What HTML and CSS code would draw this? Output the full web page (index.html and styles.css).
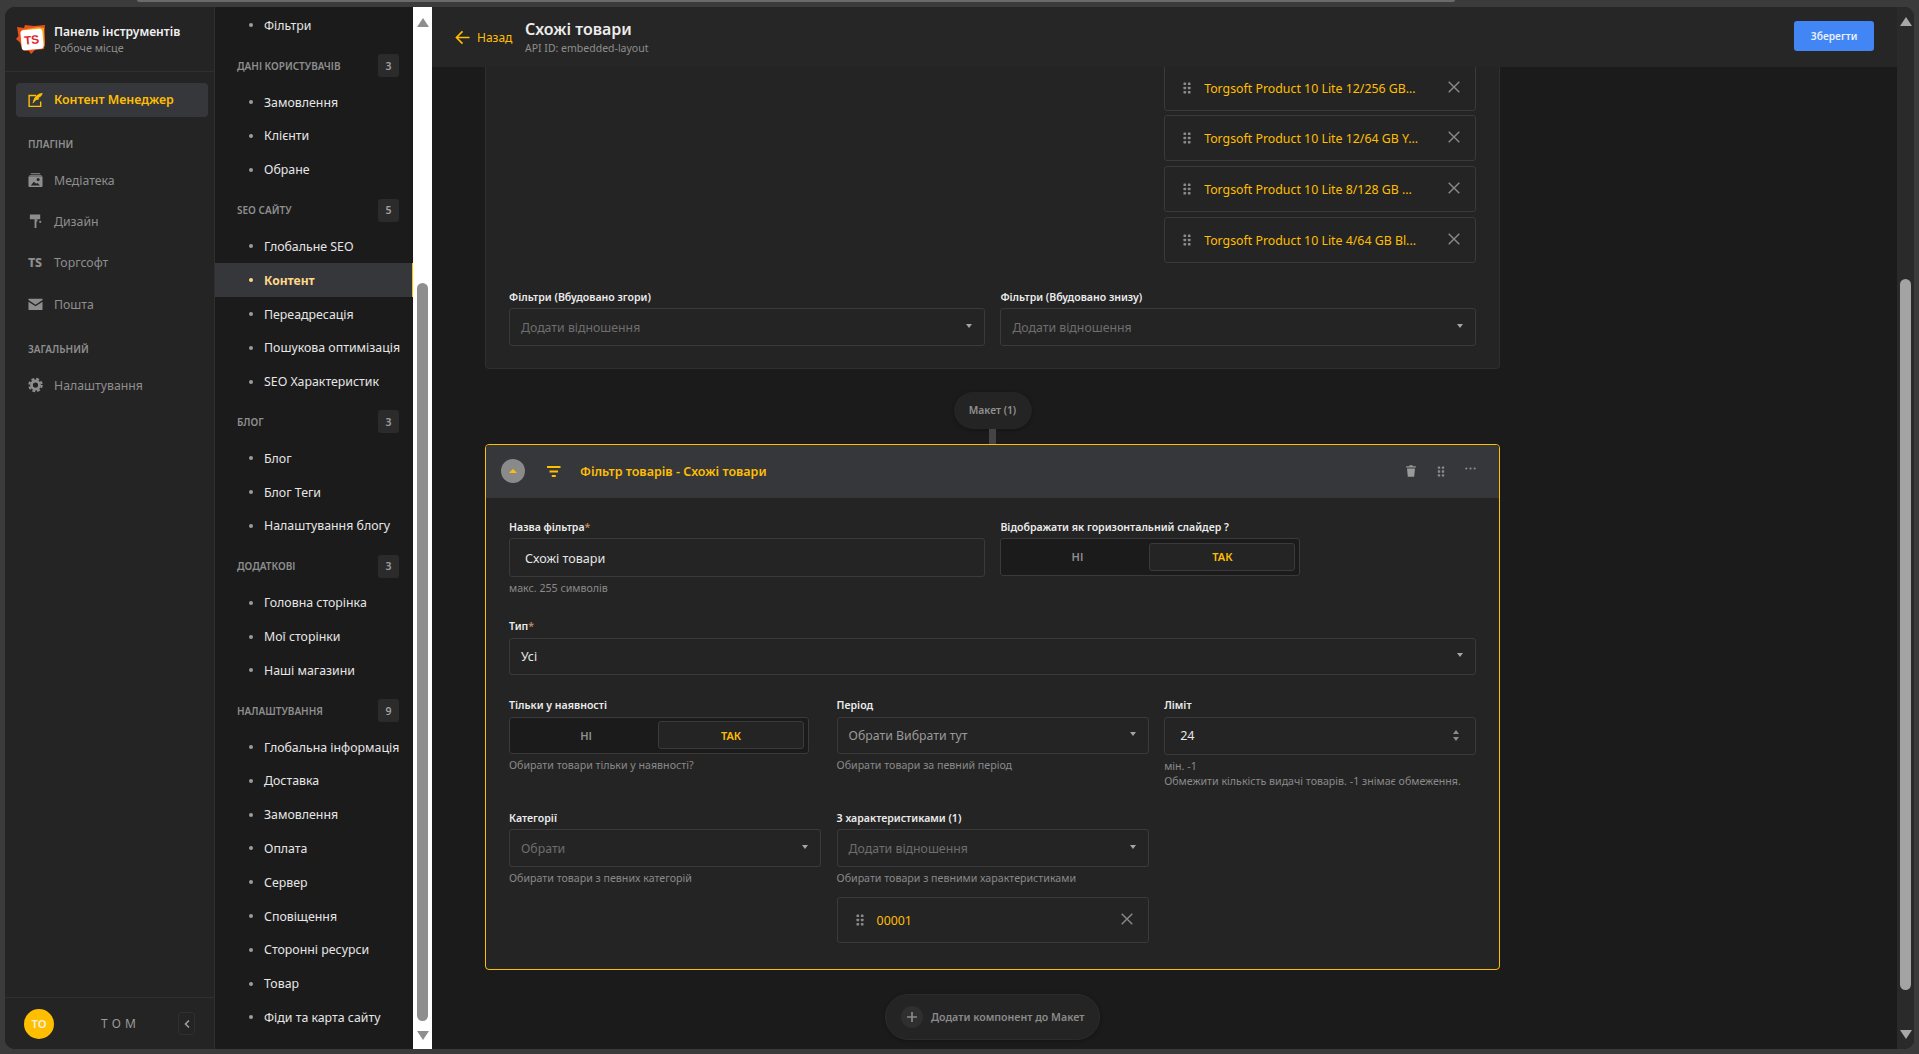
FILE: index.html
```html
<!DOCTYPE html>
<html lang="uk">
<head>
<meta charset="utf-8">
<title>Схожі товари</title>
<link rel="stylesheet" href="styles.css">
</head>
<body>
<svg class="sprite" aria-hidden="true">
  <symbol id="i-handle" viewBox="0 0 8 12"><g fill="currentColor"><rect x="0.5" y="0.5" width="2.6" height="2.6" rx=".6"/><rect x="4.9" y="0.5" width="2.6" height="2.6" rx=".6"/><rect x="0.5" y="4.7" width="2.6" height="2.6" rx=".6"/><rect x="4.9" y="4.7" width="2.6" height="2.6" rx=".6"/><rect x="0.5" y="8.9" width="2.6" height="2.6" rx=".6"/><rect x="4.9" y="8.9" width="2.6" height="2.6" rx=".6"/></g></symbol>
  <symbol id="i-close" viewBox="0 0 12 12"><path d="M.7.7l10.6 10.6M11.3.7L.7 11.3" fill="none" stroke="currentColor" stroke-width="1.4"/></symbol>
</svg>
<div class="topline"></div>
<div class="app">
  <aside class="side">
    <div class="brand">
      <svg class="logo" viewBox="0 0 30 30">
        <path d="M1 3l7 1 1-3 9 1 11-1-.5 6 .5 11-1 7-9 1-4 4-2-3-6-.5-3-8-4-3.500 2.500-3z" fill="#e8511a"/>
        <path d="M6 6l16-3 6 1 .5 18-7 1.500H9z" fill="#f7a414"/>
        <rect x="5" y="5.500" width="22" height="20" rx="3" fill="#fff" transform="rotate(-5 16 15)"/>
        <text x="15.500" y="20" class="logo-t" transform="rotate(-5 16 15)">TS</text>
      </svg>
      <div class="brand-txt">
        <div class="brand-t">Панель інструментів</div>
        <div class="brand-s">Робоче місце</div>
      </div>
    </div>
    <nav class="side-nav">
      <a class="side-active">
        <svg class="ico" viewBox="0 0 16 16"><path d="M8.500 3.200H1.200v11.600h12.300V9.500" fill="none" stroke="currentColor" stroke-width="1.500"/><path d="M15.800.4c-4.800.3-8 2.600-10 7.600l-1 3.600 1.300-.8c1.100-1.700 2.200-2.800 3.400-3.200l1.600.1 1-1.500-1.500-.1 2.200-1.200c1.300-1 2.200-2.600 3-4.500z" fill="currentColor"/></svg>
        <span>Контент Менеджер</span>
      </a>
      <div class="side-head side-head-first">ПЛАГІНИ</div>
      <a class="side-item">
        <svg class="ico" viewBox="0 0 16 16"><path d="M3 .8h10v1H3zM1.500 2.800h13v1h-13z" fill="currentColor"/><rect x="0.500" y="4" width="15" height="11.500" rx="1" fill="currentColor"/><circle cx="10.800" cy="7.500" r="1.600" fill="#242424"/><path d="M3 13.800l3.200-4 2.500 2.300 1.300-1 2.800 2.700z" fill="#242424"/></svg>
        <span>Медіатека</span>
      </a>
      <a class="side-item">
        <svg class="ico" viewBox="0 0 16 16"><path d="M2 1h11v5H2z" fill="currentColor"/><path d="M7 6h3v2.500H9v7H7z" fill="currentColor"/><circle cx="13" cy="8.800" r="1.200" fill="currentColor"/></svg>
        <span>Дизайн</span>
      </a>
      <a class="side-item">
        <span class="ts">TS</span>
        <span>Торгсофт</span>
      </a>
      <a class="side-item">
        <svg class="ico" viewBox="0 0 16 16"><path d="M.5 2.500h15v1.300L8 8.800.5 3.800z" fill="currentColor"/><path d="M.5 5.500L8 10.500l7.500-5v8a1 1 0 0 1-1 1h-13a1 1 0 0 1-1-1z" fill="currentColor"/></svg>
        <span>Пошта</span>
      </a>
      <div class="side-head">ЗАГАЛЬНИЙ</div>
      <a class="side-item">
        <svg class="ico" viewBox="0 0 16 16"><circle cx="8" cy="8" r="4.300" fill="none" stroke="currentColor" stroke-width="3"/><circle cx="8" cy="8" r="6.600" fill="none" stroke="currentColor" stroke-width="2.200" stroke-dasharray="3.100 2.080"/></svg>
        <span>Налаштування</span>
      </a>
    </nav>
    <div class="side-foot">
      <div class="avatar">ТО</div>
      <div class="user">ТОМ</div>
      <button class="collapse" type="button"><svg viewBox="0 0 8 10"><path d="M6 1.500L2.500 5 6 8.500" fill="none" stroke="currentColor" stroke-width="1.600"/></svg></button>
    </div>
  </aside>

  <nav class="sub">
    <a class="sub-item">Фільтри</a>
    <div class="sub-head"><span>ДАНІ КОРИСТУВАЧІВ</span><b>3</b></div>
    <a class="sub-item">Замовлення</a>
    <a class="sub-item">Клієнти</a>
    <a class="sub-item">Обране</a>
    <div class="sub-head"><span>SEO САЙТУ</span><b>5</b></div>
    <a class="sub-item">Глобальне SEO</a>
    <a class="sub-item sub-active">Контент</a>
    <a class="sub-item">Переадресація</a>
    <a class="sub-item">Пошукова оптимізація</a>
    <a class="sub-item">SEO Характеристик</a>
    <div class="sub-head"><span>БЛОГ</span><b>3</b></div>
    <a class="sub-item">Блог</a>
    <a class="sub-item">Блог Теги</a>
    <a class="sub-item">Налаштування блогу</a>
    <div class="sub-head"><span>ДОДАТКОВІ</span><b>3</b></div>
    <a class="sub-item">Головна сторінка</a>
    <a class="sub-item">Мої сторінки</a>
    <a class="sub-item">Наші магазини</a>
    <div class="sub-head"><span>НАЛАШТУВАННЯ</span><b>9</b></div>
    <a class="sub-item">Глобальна інформація</a>
    <a class="sub-item">Доставка</a>
    <a class="sub-item">Замовлення</a>
    <a class="sub-item">Оплата</a>
    <a class="sub-item">Сервер</a>
    <a class="sub-item">Сповіщення</a>
    <a class="sub-item">Сторонні ресурси</a>
    <a class="sub-item">Товар</a>
    <a class="sub-item">Фіди та карта сайту</a>
  </nav>
  <div class="bar bar-sub">
    <i class="arrow-up"></i>
    <i class="thumb thumb-sub"></i>
    <i class="arrow-down"></i>
  </div>

  <main class="main">
    <header class="head">
      <a class="back">
        <svg viewBox="0 0 16 16"><path d="M15.500 8H1.500M8 1.500L1.500 8 8 14.500" fill="none" stroke="currentColor" stroke-width="1.700"/></svg>
        <span>Назад</span>
      </a>
      <div class="head-t">
        <h1>Схожі товари</h1>
        <p>API ID: embedded-layout</p>
      </div>
      <button class="save" type="button">Зберегти</button>
    </header>
    <div class="scroll">
      <section class="card card-top">
        <div class="cols3">
          <div class="rel-list">
            <div class="rel"><svg class="handle"><use href="#i-handle"/></svg><span>Torgsoft Product 10 Lite 12/256 GB...</span><svg class="x"><use href="#i-close"/></svg></div>
            <div class="rel"><svg class="handle"><use href="#i-handle"/></svg><span>Torgsoft Product 10 Lite 12/64 GB Y...</span><svg class="x"><use href="#i-close"/></svg></div>
            <div class="rel"><svg class="handle"><use href="#i-handle"/></svg><span>Torgsoft Product 10 Lite 8/128 GB ...</span><svg class="x"><use href="#i-close"/></svg></div>
            <div class="rel"><svg class="handle"><use href="#i-handle"/></svg><span>Torgsoft Product 10 Lite 4/64 GB Bl...</span><svg class="x"><use href="#i-close"/></svg></div>
          </div>
        </div>
        <div class="cols2 row-filters">
          <div><label class="lbl">Фільтри (Вбудовано згори)</label><div class="ctl sel ph">Додати відношення</div></div>
          <div><label class="lbl">Фільтри (Вбудовано знизу)</label><div class="ctl sel ph">Додати відношення</div></div>
        </div>
      </section>

      <div class="pill-wrap"><div class="pill">Макет (1)</div><div class="conn"></div></div>

      <section class="card card-open">
        <div class="card-head">
          <span class="toggle-btn"><i></i></span>
          <svg class="filter" viewBox="0 0 14 11"><path d="M0 0h13.500v2H0zM2.500 4.500h8.500v2H2.500zM4.800 9h4v2h-4z" fill="currentColor"/></svg>
          <span class="card-title">Фільтр товарів - Схожі товари</span>
          <div class="card-tools">
            <svg class="t-trash" viewBox="0 0 10 12"><path d="M3.500.3h3v1h3.300v1.200H.2V1.300h3.300zM1 3.400h8l-.8 8.300H1.800z" fill="currentColor"/></svg>
            <svg class="t-grip"><use href="#i-handle"/></svg>
            <svg class="t-dots" viewBox="0 0 11 3"><circle cx="1.300" cy="1.500" r="1.100" fill="currentColor"/><circle cx="5.500" cy="1.500" r="1.100" fill="currentColor"/><circle cx="9.700" cy="1.500" r="1.100" fill="currentColor"/></svg>
          </div>
        </div>
        <div class="card-body">
          <div class="cols2 r1">
            <div><label class="lbl">Назва фільтра<em>*</em></label><div class="ctl inp inp-tall val">Схожі товари</div><p class="hint">макс. 255 символів</p></div>
            <div><label class="lbl">Відображати як горизонтальний слайдер ?</label>
              <div class="tog"><span class="tog-off">НІ</span><span class="tog-on">ТАК</span></div></div>
          </div>
          <div class="r2"><label class="lbl">Тип<em>*</em></label><div class="ctl sel val">Усі</div></div>
          <div class="cols3 r3">
            <div><label class="lbl">Тільки у наявності</label>
              <div class="tog"><span class="tog-off">НІ</span><span class="tog-on">ТАК</span></div>
              <p class="hint">Обирати товари тільки у наявності?</p></div>
            <div><label class="lbl">Період</label><div class="ctl sel mid">Обрати Вибрати тут</div><p class="hint">Обирати товари за певний період</p></div>
            <div><label class="lbl">Ліміт</label>
              <div class="ctl inp num val"><span>24</span><span class="spin"><i></i><i></i></span></div>
              <p class="hint">мін. -1</p>
              <p class="hint">Обмежити кількість видачі товарів. -1 знімає обмеження.</p></div>
          </div>
          <div class="cols3 r4">
            <div><label class="lbl">Категорії</label><div class="ctl sel ph">Обрати</div><p class="hint">Обирати товари з певних категорій</p></div>
            <div><label class="lbl">З характеристиками (1)</label><div class="ctl sel ph">Додати відношення</div><p class="hint">Обирати товари з певними характеристиками</p>
              <div class="rel rel-one"><svg class="handle"><use href="#i-handle"/></svg><span>00001</span><svg class="x"><use href="#i-close"/></svg></div></div>
          </div>
        </div>
      </section>

      <button class="add" type="button"><span class="plus"><svg viewBox="0 0 12 12"><path d="M6 1v10M1 6h10" stroke="currentColor" stroke-width="1.700"/></svg></span>Додати компонент до Макет</button>
    </div>
  </main>
  <div class="bar bar-main">
    <i class="arrow-up"></i>
    <i class="thumb thumb-main"></i>
    <i class="arrow-down"></i>
  </div>
</div>
</body>
</html>
```
FILE: styles.css
```css
* { box-sizing: border-box; }
html, body { margin: 0; height: 100%; }
body {
  background: #3b3b3b;
  padding: 7px 5px 5px;
  font-family: "Noto Sans", "Open Sans", sans-serif;
  overflow: hidden;
  position: relative;
  color: #e6e6e6;
}
.sprite { display: none; }
.topline {
  position: absolute;
  left: 137px; top: 0;
  width: 1318px; height: 2px;
  background: #6a6a6a;
  border-radius: 0 0 4px 4px;
}
.app {
  display: flex;
  height: 1042px;
  border-radius: 10px;
  overflow: hidden;
  background: #1b1b1b;
}

/* left rail */
.side {
  width: 210px;
  flex: none;
  background: #242424;
  border-right: 1px solid #2f2f2f;
  display: flex;
  flex-direction: column;
}
.brand {
  height: 65px;
  flex: none;
  border-bottom: 1px solid #2f2f2f;
  display: flex;
  align-items: center;
  padding: 0 0 1px 11px;
  gap: 8px;
}
.logo { width: 30px; height: 30px; flex: none; }
.logo-t { font: 800 12px "Liberation Sans", sans-serif; fill: #e0252b; text-anchor: middle; letter-spacing: -.3px; }
.brand-t { font-size: 12.100px; font-weight: 600; color: #f0f0f0; line-height: 17px; }
.brand-s { font-size: 10.800px; color: #8e8e8e; line-height: 15px; margin-top: 0; }
.side-nav { flex: 1; padding: 11px 6px 0 11px; }
.side-active {
  height: 34px;
  background: #36373b;
  border-radius: 4px;
  display: flex;
  align-items: center;
  padding: 0 0 1px 12px;
  gap: 11px;
  color: #ffbf00;
  font-size: 12.400px;
  font-weight: 600;
}
.ico { width: 15px; height: 16px; flex: none; }
.side-head {
  font-size: 10px;
  font-weight: 600;
  color: #8e8e8e;
  padding-left: 12px;
  height: 14px;
  line-height: 14px;
  margin: 17px 0 9px;
}
.side-head-first { margin-top: 20px; }
.side-item {
  height: 41.300px;
  display: flex;
  align-items: center;
  padding: 0 0 1px 12px;
  gap: 11px;
  color: #8e8e8e;
  font-size: 12.300px;
}
.ts { width: 15px; font: 800 12.500px "Noto Sans", sans-serif; letter-spacing: -.4px; flex: none; }
.side-foot {
  height: 52px;
  flex: none;
  border-top: 1px solid #2f2f2f;
  display: flex;
  align-items: center;
  padding-left: 19px;
  position: relative;
}
.avatar {
  width: 30px; height: 30px;
  border-radius: 50%;
  background: #ffbf00;
  color: #f5f0dc;
  font-size: 11.500px;
  font-weight: 600;
  display: flex;
  align-items: center;
  justify-content: center;
  flex: none;
}
.user {
  margin-left: 47px;
  width: 77px;
  font-size: 12px;
  letter-spacing: 4.200px;
  color: #9a9a9a;
}
.collapse {
  width: 17px; height: 23px;
  padding: 0;
  background: transparent;
  border: 1px solid #2f2f2f;
  border-radius: 3px;
  color: #a0a0a0;
  display: flex;
  align-items: center;
  justify-content: center;
}
.collapse svg { width: 8px; height: 10px; }

/* sub navigation */
.sub {
  width: 198px;
  flex: none;
  background: #1b1b1b;
  padding-top: 1.350px;
  overflow: hidden;
}
.sub-item {
  height: 33.780px;
  display: flex;
  align-items: center;
  padding-left: 49px;
  color: #e6e6e6;
  font-size: 12.350px;
  position: relative;
  white-space: nowrap;
}
.sub-item::before {
  content: "";
  position: absolute;
  left: 34px; top: 50%;
  width: 4px; height: 4px;
  margin-top: -2px;
  border-radius: 50%;
  background: #9c9c9c;
}
.sub-active {
  background: #36373b;
  color: #ffd88a;
  font-weight: 700;
  font-size: 12.100px;
  border-right: 1px solid #ffbf00;
}
.sub-active::before { background: #ffd88a; }
.sub-head {
  height: 23px;
  margin: 12px 14px 8.100px 22px;
  display: flex;
  align-items: center;
  justify-content: space-between;
  font-size: 10px;
  font-weight: 600;
  color: #8e8e8e;
}
.sub-head b {
  width: 21px; height: 23px;
  background: #2b2b2b;
  border-radius: 3px;
  font-weight: 600;
  font-size: 10.500px;
  color: #a0a0a0;
  display: flex;
  align-items: center;
  justify-content: center;
}

/* fake scrollbars */
.bar {
  flex: none;
  display: flex;
  flex-direction: column;
  align-items: center;
}
.bar-sub { width: 19px; background: #fff; padding-top: 11px; }
.bar-main { width: 17px; background: #2a2a2a; padding-top: 10px; }
.arrow-up, .arrow-down { width: 0; height: 0; border-left: 6.500px solid transparent; border-right: 6.500px solid transparent; flex: none; }
.arrow-up { border-bottom: 9px solid #8e8e8e; }
.arrow-down { border-top: 9px solid #8e8e8e; }
.bar-main .arrow-up { border-bottom-color: #a8a8a8; }
.bar-main .arrow-down { border-top-color: #a8a8a8; }
.thumb { width: 11px; border-radius: 6px; flex: none; }
.thumb-sub { height: 738px; background: #8e8e8e; margin: 256px 0 10px; }
.thumb-main { height: 711px; background: #a3a3a3; margin: 253px 0 40px; }

/* main */
.main { width: 1465px; flex: none; display: flex; flex-direction: column; min-height: 0; }
.head {
  height: 60px;
  flex: none;
  background: #262626;
  display: flex;
  align-items: center;
  padding: 0 23px;
  position: relative;
  z-index: 1;
}
.back { display: flex; align-items: center; gap: 7px; color: #ffbf00; font-size: 12px; width: 70px; flex: none; }
.back svg { width: 15px; height: 15px; flex: none; }
.head-t { flex: 1; }
.head-t h1 { margin: 0; font-size: 16px; font-weight: 600; line-height: 21px; color: #ececec; }
.head-t p { margin: 1px 0 0; font-size: 10.500px; line-height: 15px; color: #8e8e8e; }
.save {
  width: 80px; height: 30px;
  border: 0;
  border-radius: 3px;
  background: #4285f4;
  color: #e9f0ff;
  font: 600 10.200px "Noto Sans", sans-serif;
  margin-top: -2px;
}
.scroll {
  flex: 1;
  min-height: 0;
  overflow: hidden;
  display: flex;
  flex-direction: column;
  justify-content: flex-end;
  align-items: flex-start;
  padding: 0 0 8.600px 53px;
}
.card {
  width: 1015px;
  flex: none;
  background: #242424;
  border-radius: 4px;
}
.card-top { border: 1px solid #2f2f2f; padding: 0 23px 22.600px; }
.cols2 { display: grid; grid-template-columns: 476px 476px; column-gap: 15.400px; }
.cols3 { display: grid; grid-template-columns: repeat(3, 312.200px); column-gap: 15.400px; }
.rel-list { display: flex; flex-direction: column; gap: 4.700px; grid-column: 3; }
.rel {
  height: 46px;
  border: 1px solid #3a3a3a;
  border-radius: 3px;
  display: flex;
  align-items: center;
  padding: 0 15px 0 18px;
  color: #ffbf00;
  font-size: 12.350px;
  white-space: nowrap;
}
.rel span { flex: 1; margin-top: 1px; }
.handle { width: 8px; height: 12px; color: #8a8a8a; margin-right: 13px; flex: none; }
.x { width: 12px; height: 12px; color: #8a8a8a; flex: none; margin-top: -2px; }
.row-filters { margin-top: 26px; }
.lbl {
  display: block;
  font-size: 10.550px;
  font-weight: 600;
  line-height: 16px;
  color: #ececec;
  margin-bottom: 3.500px;
  white-space: nowrap;
}
.lbl em { color: #c08a66; font-style: normal; }
.ctl {
  height: 37.500px;
  border: 1px solid #3a3a3a;
  border-radius: 3px;
  background: #242424;
  display: flex;
  align-items: center;
  padding: 0 11px;
  font-size: 12.300px;
  position: relative;
  white-space: nowrap;
}
.inp { height: 38.500px; padding-left: 15px; font-size: 12.600px; }
.inp-tall { padding-top: 3px; }
.val { color: #e6e6e6; }
.ph { color: #6e6e6e; padding-top: 2px; }
.mid { color: #9a9a9a; }
.sel::after {
  content: "";
  position: absolute;
  right: 12px; top: 50%;
  margin-top: -3px;
  border-left: 3.500px solid transparent;
  border-right: 3.500px solid transparent;
  border-top: 4px solid #a5a5a5;
}
.num { justify-content: space-between; padding-right: 16px; }
.spin { display: flex; flex-direction: column; gap: 3px; }
.spin i { width: 0; height: 0; border-left: 3.500px solid transparent; border-right: 3.500px solid transparent; }
.spin i:first-child { border-bottom: 4px solid #8a8a8a; }
.spin i:last-child { border-top: 4px solid #8a8a8a; }
.hint { margin: 0; font-size: 10.650px; line-height: 14.500px; color: #8a8a8a; white-space: nowrap; }
.ctl + .hint, .tog + .hint { margin-top: 4px; }

.pill-wrap { width: 1015px; display: flex; flex-direction: column; align-items: center; margin-top: 22.500px; flex: none; }
.pill {
  height: 37px;
  width: 78px;
  border-radius: 19px;
  background: #242424;
  color: #909090;
  font-size: 10.300px;
  font-weight: 600;
  display: flex;
  align-items: center;
  justify-content: center;
  box-shadow: 0 1px 4px rgba(0,0,0,.3);
}
.conn { width: 7px; height: 15px; background: #444; }
.card-open { border: 1px solid #ffbf00; overflow: hidden; }
.card-head {
  height: 53px;
  background: #36373b;
  display: flex;
  align-items: center;
  padding-left: 15px;
}
.toggle-btn {
  width: 24px; height: 24px;
  border-radius: 50%;
  background: #8a8a8a;
  display: flex;
  align-items: center;
  justify-content: center;
  flex: none;
}
.toggle-btn i { width: 0; height: 0; border-left: 4px solid transparent; border-right: 4px solid transparent; border-bottom: 4.500px solid #ffbf00; }
.filter { width: 14px; height: 11px; color: #ffbf00; margin-left: 22px; flex: none; }
.card-title { margin-left: 19px; color: #ffbf00; font-size: 12.500px; font-weight: 600; }
.card-tools { margin-left: auto; display: flex; align-items: center; padding-right: 23px; color: #9a9a9a; }
.t-trash { width: 10px; height: 12px; }
.t-grip { width: 8px; height: 11px; margin-left: 21px; color: #8a8a8a; }
.t-dots { width: 11px; height: 3px; margin-left: 20px; margin-top: -5px; color: #8a8a8a; }
.card-body { padding: 21px 23px 26px; }
.r1 { margin-bottom: 23px; }
.r2 { margin-bottom: 22px; }
.r3 { margin-bottom: 21.500px; }
.tog {
  width: 300px;
  height: 37.500px;
  border: 1px solid #3a3a3a;
  border-radius: 3px;
  background: #1b1b1b;
  display: flex;
  align-items: center;
  padding: 4px;
  font-size: 11px;
  font-weight: 600;
}
.tog span { flex: 1; height: 28px; display: flex; align-items: center; justify-content: center; }
.tog-off { color: #8e8e8e; }
.tog-on { color: #ffbf00; background: #242424; border: 1px solid #3a3a3a; border-radius: 3px; }
.rel-one { margin-top: 12px; }
.add {
  width: 215px;
  height: 46.700px;
  border: 1px solid #2c2c2c;
  border-radius: 24px;
  background: #242424;
  color: #8a8a8a;
  font: 600 10.650px "Noto Sans", sans-serif;
  display: flex;
  align-items: center;
  padding: 0 0 0 15px;
  gap: 8px;
  margin: 23.500px 0 0 400px;
  flex: none;
  white-space: nowrap;
  box-shadow: 0 1px 4px rgba(0,0,0,.3);
}
.plus { width: 22px; height: 22px; border-radius: 50%; background: #2f2f2f; display: flex; align-items: center; justify-content: center; color: #8a8a8a; flex: none; }
.plus svg { width: 12px; height: 12px; }
```
